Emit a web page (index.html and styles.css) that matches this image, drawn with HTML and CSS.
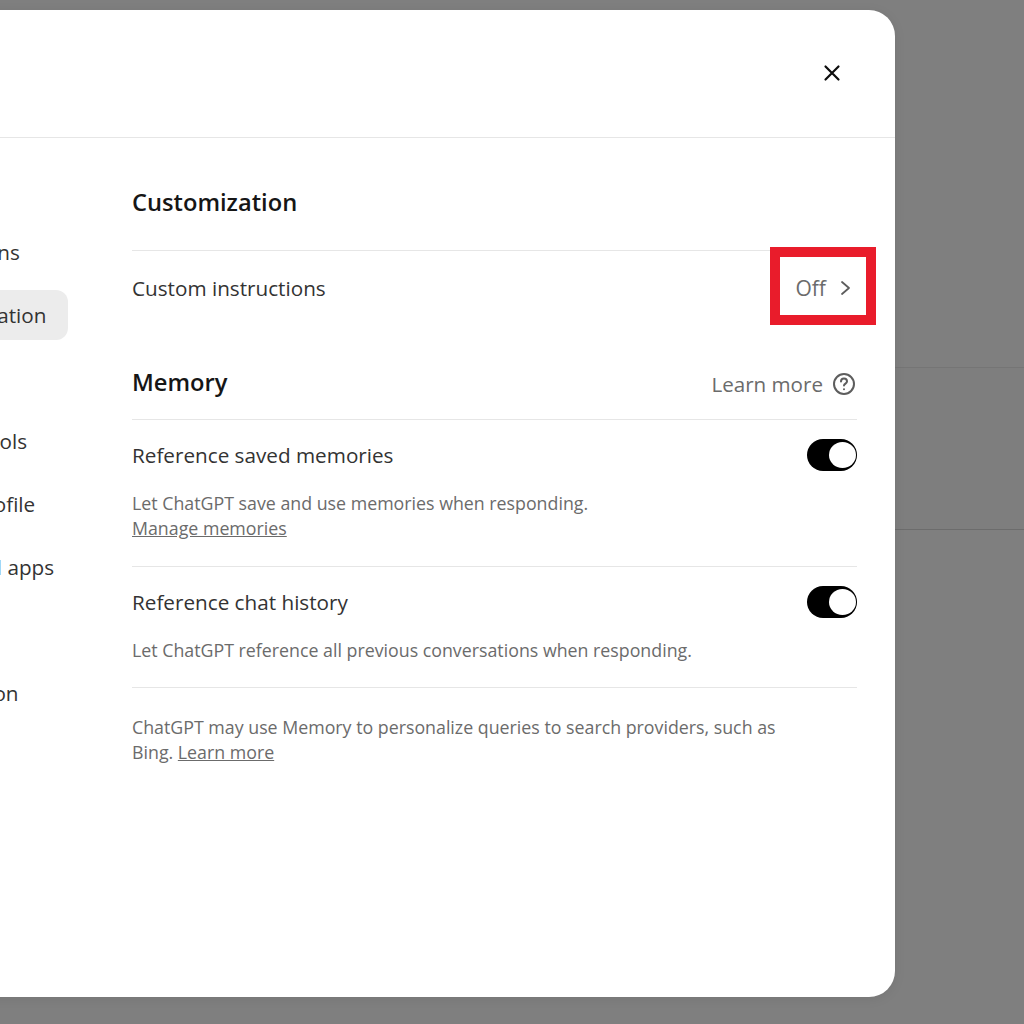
FILE: index.html
```html
<!DOCTYPE html>
<html lang="en">
<head>
    <meta charset="UTF-8">
    <title>Settings - Personalization</title>
    <link rel="stylesheet" href="styles.css">
</head>
<body>
    <!-- page behind the scrim -->
    <div class="behind"></div>

    <div class="modal">
        <header class="modal-head">
            <button class="close" aria-label="Close">
                <svg width="24" height="24" viewBox="0 0 24 24" fill="none" stroke="#0d0d0d" stroke-width="2.2" stroke-linecap="round">
                    <path d="M5.5 5.5l13 13M18.5 5.5l-13 13"/>
                </svg>
            </button>
        </header>

        <div class="modal-body">
            <nav class="side">
                <div class="side-item">General</div>
                <div class="side-item">Notifications</div>
                <div class="side-item active">Personalization</div>
                <div class="side-item">Speech</div>
                <div class="side-item">Data controls</div>
                <div class="side-item">Builder profile</div>
                <div class="side-item">Connected apps</div>
                <div class="side-item">Security</div>
                <div class="side-item">Subscription</div>
            </nav>

            <main class="content">
                <h2 class="section-title first">Customization</h2>
                <div class="row row-custom">
                    <span class="row-label">Custom instructions</span>
                    <span class="row-value">Off
                        <svg width="20" height="20" viewBox="0 0 20 20" fill="none" stroke="#5d5d5d" stroke-width="1.8" stroke-linecap="round" stroke-linejoin="round">
                            <path d="M7 4l7 6-7 6"/>
                        </svg>
                    </span>
                </div>

                <div class="section-head">
                    <h2 class="section-title">Memory</h2>
                    <span class="learn">Learn more
                        <svg width="24" height="24" viewBox="0 0 24 24" fill="none" stroke="#5d5d5d" stroke-width="2" stroke-linecap="round">
                            <circle cx="12" cy="12" r="10"/>
                            <path d="M9 9.6a3 3 0 0 1 6 0c0 1.9-3 2.2-3 4"/>
                            <path d="M12 17.2v.1"/>
                        </svg>
                    </span>
                </div>

                <div class="setting">
                    <div class="row">
                        <span class="row-label">Reference saved memories</span>
                        <span class="toggle"></span>
                    </div>
                    <p class="note">Let ChatGPT save and use memories when responding.<br><a href="#">Manage memories</a></p>
                </div>

                <div class="setting setting-last">
                    <div class="row">
                        <span class="row-label">Reference chat history</span>
                        <span class="toggle"></span>
                    </div>
                    <p class="note">Let ChatGPT reference all previous conversations when responding.</p>
                </div>

                <p class="foot">ChatGPT may use Memory to personalize queries to search providers, such as Bing. <a href="#">Learn more</a></p>
            </main>
        </div>
    </div>

    <!-- red annotation box -->
    <div class="marker"></div>
</body>
</html>
```

FILE: styles.css
```css
* {
    margin: 0;
    padding: 0;
    box-sizing: border-box;
}

html, body {
    height: 100%;
}

body {
    position: relative;
    overflow: hidden;
    background: #7f7f7f;
    font-family: "Open Sans", "Noto Sans", sans-serif;
    color: #0d0d0d;
}

/* faint page panel seen through the scrim */
.behind {
    position: absolute;
    top: 367px;
    left: 0;
    right: 0;
    height: 163px;
    border-top: 1px solid #757575;
    border-bottom: 1px solid #6c6c6c;
    background: #7e7e7e;
}

.modal {
    position: absolute;
    top: 10px;
    left: -205px;
    width: 1100px;
    height: 987px;
    background: #ffffff;
    border-radius: 26px;
    box-shadow: 0 2px 12px rgba(0, 0, 0, 0.08);
    display: flex;
    flex-direction: column;
}

.modal-head {
    height: 128px;
    flex: none;
    border-bottom: 1px solid #e6e6e6;
    display: flex;
    justify-content: flex-end;
    align-items: center;
    padding: 0 51px 2px 0;
}

.close {
    background: none;
    border: none;
    display: flex;
}

.modal-body {
    flex: 1;
    display: flex;
}

/* left navigation */
.side {
    width: 273px;
    flex: none;
    padding-top: 26px;
    display: flex;
    flex-direction: column;
    gap: 13px;
}

.side-item {
    height: 50px;
    line-height: 50px;
    padding-left: 103px;
    border-radius: 12px;
    font-size: 20.7px;
    color: #333333;
    white-space: nowrap;
}

.side-item.active {
    background: #ececec;
}

/* right content */
.content {
    width: 725px;
    margin-left: 64px;
    padding-top: 44px;
}

.section-title {
    font-size: 23.7px;
    font-weight: 600;
    line-height: 40px;
    color: #161616;
}

.section-title.first {
    height: 69px;
    border-bottom: 1px solid #e6e6e6;
}

.section-head .section-title {
    margin-bottom: 4px;
}

.row {
    display: flex;
    justify-content: space-between;
    align-items: center;
}

.row-custom {
    height: 73px;
}

.row-label {
    font-size: 20.7px;
    color: #333333;
}

.row-value {
    display: flex;
    align-items: center;
    gap: 9px;
    padding-right: 2px;
    font-size: 21px;
    color: #6b6b6b;
}

.section-head {
    height: 96px;
    padding-top: 25px;
    display: flex;
    justify-content: space-between;
    align-items: center;
    border-bottom: 1px solid #e6e6e6;
}

.learn {
    display: flex;
    align-items: center;
    gap: 9px;
    padding-right: 1px;
    font-size: 20.6px;
    color: #6b6b6b;
}

.setting {
    padding: 19px 0 25px;
    border-bottom: 1px solid #e6e6e6;
}

.setting-last {
    padding-bottom: 24px;
}

.toggle {
    position: relative;
    width: 50px;
    height: 32px;
    border-radius: 16px;
    background: #000000;
}

.toggle::after {
    content: "";
    position: absolute;
    top: 3px;
    right: 1px;
    width: 27px;
    height: 26px;
    border-radius: 50%;
    background: #ffffff;
}

.note {
    margin-top: 20px;
    font-size: 17.8px;
    line-height: 25px;
    color: #6b6b6b;
}

.note a,
.foot a {
    color: #6b6b6b;
    text-decoration: underline;
}

.foot {
    margin-top: 27px;
    width: 660px;
    font-size: 17.8px;
    line-height: 25px;
    color: #6b6b6b;
}

.marker {
    position: absolute;
    top: 247px;
    left: 770px;
    width: 106px;
    height: 78px;
    border: 10px solid #e91c2b;
}
```
